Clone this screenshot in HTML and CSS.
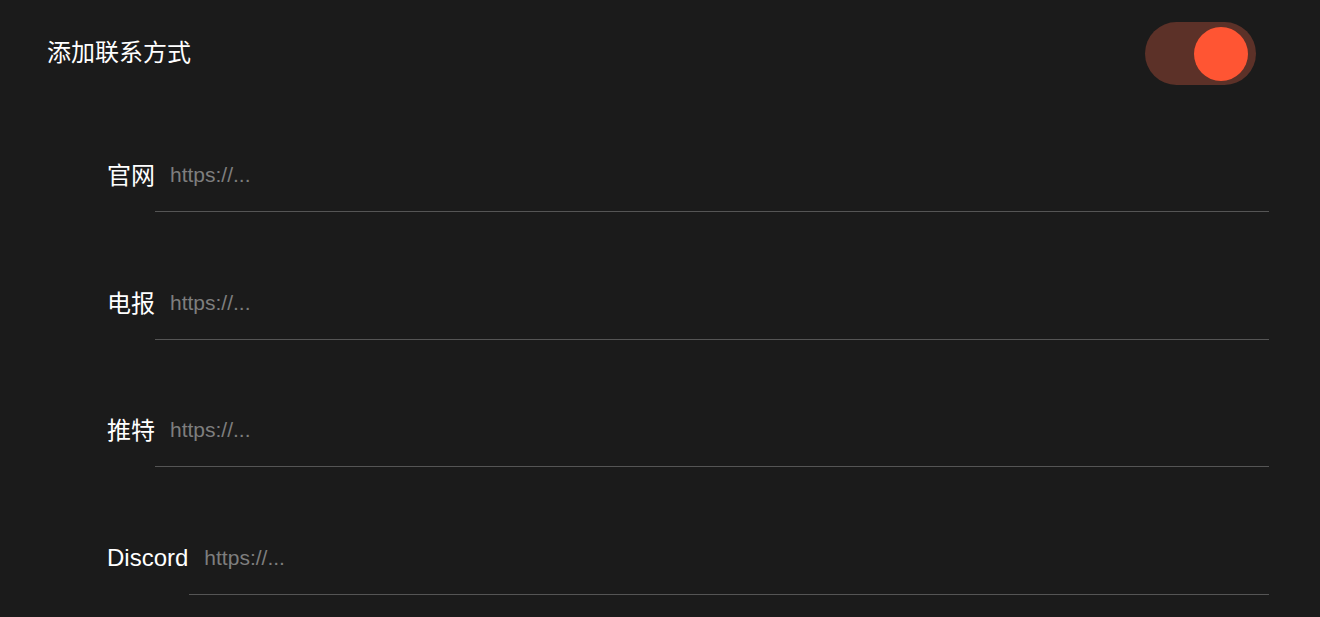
FILE: index.html
```html
<!DOCTYPE html>
<html lang="zh">
<head>
<meta charset="utf-8">
<link rel="stylesheet" href="styles.css">
</head>
<body>
<div class="page">
  <div class="header">
    <div class="title">添加联系方式</div>
    <div class="toggle"><div class="knob"></div></div>
  </div>
  <div class="rows">
    <label class="row"><span class="label">官网</span><input class="field" placeholder="https://..."></label>
    <label class="row"><span class="label">电报</span><input class="field" placeholder="https://..."></label>
    <label class="row"><span class="label">推特</span><input class="field" placeholder="https://..."></label>
    <label class="row"><span class="label latin">Discord</span><input class="field" placeholder="https://..."></label>
  </div>
</div>
</body>
</html>
```

FILE: styles.css
```css
html, body {
  margin: 0;
  background: #1b1b1b;
  height: 100%;
}
body {
  font-family: "Liberation Sans", "Noto Sans CJK SC", sans-serif;
  color: #ffffff;
  overflow: hidden;
}
.page {
  padding: 22px 51px 0 47px;
}
.header {
  display: flex;
  justify-content: space-between;
  align-items: center;
  height: 63px;
  padding-right: 13px;
}
.title {
  font-family: "Noto Sans CJK SC", sans-serif;
  font-size: 24px;
  line-height: 34px;
  padding-bottom: 5px;
}
.toggle {
  width: 111px;
  height: 63px;
  border-radius: 32px;
  background: #5c3128;
  display: flex;
  align-items: center;
  justify-content: flex-end;
  padding-right: 8px;
  box-sizing: border-box;
}
.knob {
  width: 54px;
  height: 54px;
  border-radius: 50%;
  background: #ff5533;
}
.rows {
  display: flex;
  flex-direction: column;
  gap: 55.67px;
  padding-left: 60px;
  margin-top: 55px;
}
.row {
  display: flex;
  align-items: center;
  height: 72px;
}
.label {
  font-family: "Liberation Sans", "Noto Sans CJK SC", sans-serif;
  font-size: 24px;
  color: #ffffff;
  white-space: nowrap;
  padding-bottom: 5px;
}
.label.latin {
  padding-bottom: 2px;
  padding-right: 1px;
}
.field {
  flex: 1;
  height: 72px;
  box-sizing: border-box;
  background: transparent;
  border: none;
  border-bottom: 1px solid #555555;
  outline: none;
  padding: 0 0 1px 15px;
  margin: 0;
  font-family: "Liberation Sans", sans-serif;
  font-size: 21px;
  color: #ffffff;
}
.field::placeholder {
  color: #7e7e7e;
}
```
